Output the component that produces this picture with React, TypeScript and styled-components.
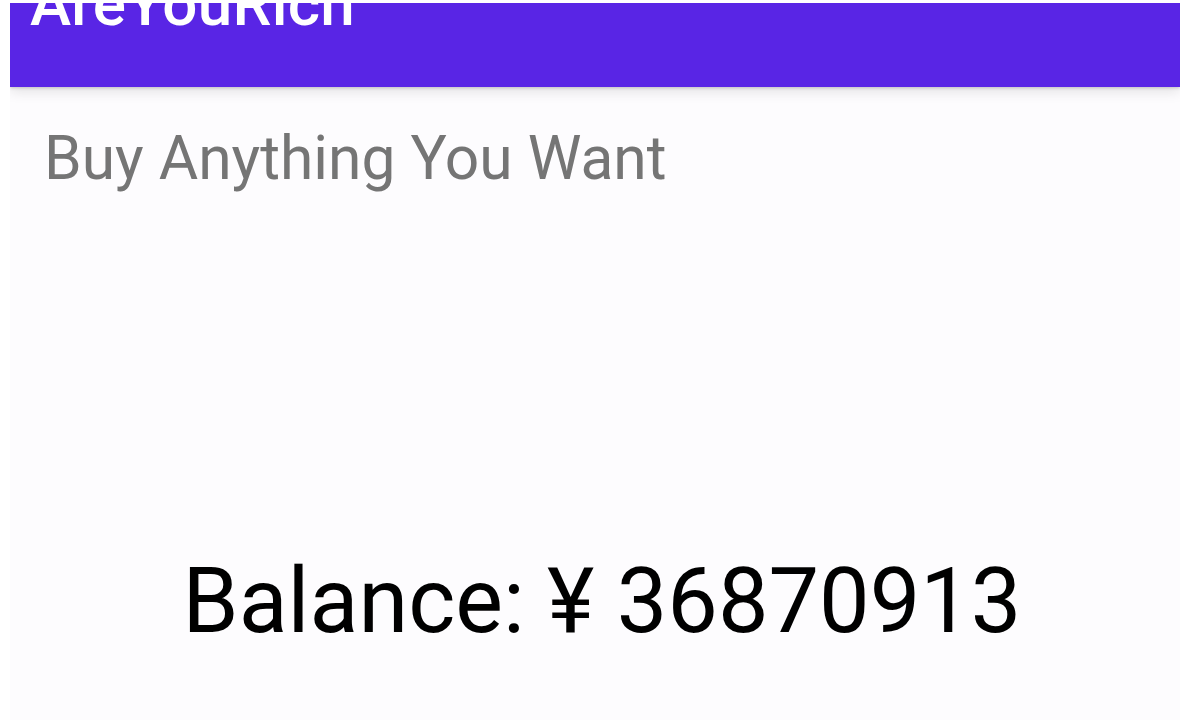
import React from "react";
import styled, { createGlobalStyle } from "styled-components";

const Global = createGlobalStyle`
  html, body { margin: 0; padding: 0; background: #ffffff; overflow: hidden; }
  body { font-family: Roboto, "Noto Sans", "Liberation Sans", sans-serif; }
`;

const Screen = styled.div`
  margin: 3px 0 0 10px;
  width: 1170px;
  height: 717px;
  background: #fdfcfe;
  display: flex;
  flex-direction: column;
  overflow: hidden;
`;

const Toolbar = styled.header`
  height: 84px;
  background: #5925e5;
  padding-left: 20px;
  overflow: hidden;
  box-shadow: 0 5px 12px rgba(0, 0, 0, 0.1), 0 1px 3px rgba(0, 0, 0, 0.18);
  position: relative;
  z-index: 1;
  flex-shrink: 0;
`;

const Title = styled.h1`
  margin: -30px 0 0;
  font-size: 62px;
  line-height: 62px;
  font-weight: 500;
  color: #ffffff;
  letter-spacing: 0.2px;
`;

const Content = styled.main`
  display: flex;
  flex-direction: column;
  padding: 0 20px 0 34px;
`;

const Subtitle = styled.p`
  margin: 37px 0 0;
  font-size: 60.5px;
  line-height: 70px;
  color: #757575;
  font-weight: 400;
`;

const Balance = styled.p`
  margin: 355px 0 0;
  font-size: 90px;
  line-height: 106px;
  color: #000000;
  text-align: center;
  font-weight: 400;
`;

export default function App() {
  return (
    <>
      <Global />
      <Screen>
        <Toolbar>
          <Title>AreYouRich</Title>
        </Toolbar>
        <Content>
          <Subtitle>Buy Anything You Want</Subtitle>
          <Balance>Balance: ¥ 36870913</Balance>
        </Content>
      </Screen>
    </>
  );
}
